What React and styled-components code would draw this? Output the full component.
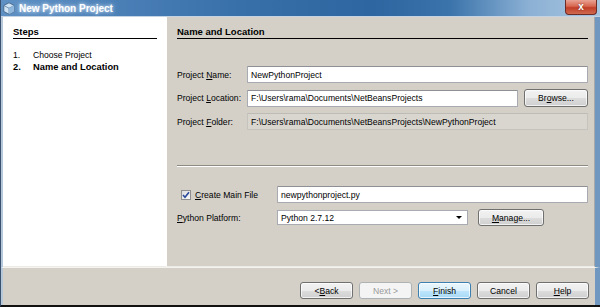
import React from "react";
import styled, { createGlobalStyle, css } from "styled-components";

const Global = createGlobalStyle`
  html, body { margin: 0; padding: 0; background: #fff; }
  body { width: 600px; height: 307px; overflow: hidden; font-family: "Liberation Sans", Arial, sans-serif; }
  * { box-sizing: border-box; }
`;

const Window = styled.div`
  width: 600px;
  height: 307px;
  display: flex;
  flex-direction: column;
  background: #d4d0c8;
  border-left: 1px solid #3a5270;
  border-bottom: 2px solid #111;
  font-size: 8.6px;
  color: #000;
`;

const TitleBar = styled.div`
  height: 17px;
  flex: none;
  display: flex;
  align-items: center;
  gap: 4px;
  padding: 0 3px 0 2px;
  background: linear-gradient(to right, #5e90c4 0%, #4a7fb6 20%, #3870a9 40%, #2d66a0 62%, #3b74ab 75%, #8bb0d4 88%, #a9c6e0 100%);
  border-bottom: 1px solid #c3d3e4;
`;

const TitleText = styled.span`
  color: #fff;
  font-weight: bold;
  font-size: 10px;
  text-shadow: 0 0 3px #d8e6f4, 0 0 6px #a8c4e0;
  flex: 1;
`;

const CloseButton = styled.div`
  width: 32px;
  height: 15px;
  margin-top: -2px;
  border: 1px solid #6d2b25;
  border-top: none;
  border-radius: 0 0 4px 4px;
  background: linear-gradient(#e9a394 0%, #d6654f 45%, #c13e28 55%, #cf6a4f 100%);
  display: flex;
  align-items: center;
  justify-content: center;
  color: #fff;
  font-weight: bold;
  font-size: 10px;
  text-shadow: 0 0 2px #6d2b25;
`;

const Body = styled.div`
  flex: 1;
  display: flex;
  border-left: 2px solid #b7c8db;
  border-right: 5px solid #6f97c0;
  min-height: 0;
`;

const StepsPanel = styled.div`
  width: 163px;
  flex: none;
  background: #fff;
  padding: 9px 9px 0 10px;
  border-bottom: 1px solid #ecebe6;
`;

const Header = styled.div`
  font-weight: bold;
  font-size: 9.5px;
  line-height: 12px;
  border-bottom: 1px solid #000;
  padding-bottom: 0;
`;

const StepList = styled.ol`
  list-style: none;
  margin: 10px 0 0;
  padding: 0;
`;

const Step = styled.li`
  display: flex;
  line-height: 12px;
  font-weight: ${(p) => (p.$current ? "bold" : "normal")};
  font-size: ${(p) => (p.$current ? "9.3px" : "8.6px")};
`;

const StepNum = styled.span`
  width: 20px;
  flex: none;
`;

const Content = styled.div`
  flex: 1;
  display: flex;
  flex-direction: column;
  padding: 9px 6px 0 10px;
  border-left: 1px solid #fff;
  border-right: 1px solid #a8a8a8;
  border-bottom: 1px solid #ecebe6;
`;

const Form = styled.div`
  display: grid;
  grid-template-columns: 70px 1fr;
  align-items: center;
  row-gap: 6px;
  margin-top: 27px;
`;

const Label = styled.span`
  white-space: nowrap;
`;

const FieldRow = styled.div`
  display: flex;
  gap: 6px;
  align-items: center;
`;

const fieldBase = css`
  height: 17px;
  display: flex;
  align-items: center;
  padding: 0 3px;
  white-space: nowrap;
  overflow: hidden;
`;

const Field = styled.div`
  ${fieldBase}
  flex: 1;
  background: ${(p) => (p.$disabled ? "#d9d6d0" : "#fff")};
  border: 1px solid ${(p) => (p.$disabled ? "#c5c3be" : "#a9abb2")};
  border-top-color: ${(p) => (p.$disabled ? "#bdbbb6" : "#8e9096")};
  border-radius: 1px;
`;

const Button = styled.div`
  height: ${(p) => p.$h || 17}px;
  width: ${(p) => p.$w}px;
  flex: none;
  display: flex;
  align-items: center;
  justify-content: center;
  border: 1px solid ${(p) => (p.$default ? "#3c7fb1" : p.$disabled ? "#adb2b5" : "#707070")};
  border-radius: 3px;
  color: ${(p) => (p.$disabled ? "#9a9a9a" : "#000")};
  background: ${(p) =>
    p.$default
      ? "linear-gradient(#eaf6fd 0%, #d9f0fc 50%, #bee6fd 51%, #a7d9f5 100%)"
      : p.$disabled
      ? "#f4f4f4"
      : "linear-gradient(#f2f2f2 0%, #ebebeb 50%, #dddddd 51%, #cfcfcf 100%)"};
  box-shadow: inset 0 0 0 1px ${(p) => (p.$disabled ? "#f4f4f4" : "rgba(255,255,255,0.7)")};
`;

const Separator = styled.div`
  margin-top: 35px;
  border-top: 1px solid #8d8a84;
  border-bottom: 1px solid #fff;
`;

const BottomForm = styled.div`
  display: grid;
  grid-template-columns: 100px 1fr;
  align-items: center;
  row-gap: 6px;
  margin-top: 19px;
`;

const CheckLabel = styled.label`
  display: flex;
  align-items: center;
  gap: 4px;
  padding-left: 4px;
`;

const Check = styled.span`
  width: 10px;
  height: 10px;
  border: 1px solid #8f8f8f;
  background: linear-gradient(135deg, #dcdcdc, #fafafa);
  display: flex;
  align-items: center;
  justify-content: center;
`;

const Select = styled.div`
  ${fieldBase}
  width: 191px;
  height: 15px;
  background: #fff;
  border: 1px solid #a9abb2;
  justify-content: space-between;
`;

const Arrow = styled.span`
  width: 0;
  height: 0;
  border-left: 3px solid transparent;
  border-right: 3px solid transparent;
  border-top: 3px solid #000;
  margin-right: 2px;
`;

const PlatformRow = styled.div`
  display: flex;
  align-items: center;
  gap: 10px;
`;

const ButtonBar = styled.div`
  height: 38px;
  flex: none;
  display: flex;
  justify-content: flex-end;
  align-items: flex-start;
  gap: 6px;
  padding: 14px 6px 0 0;
  border-left: 2px solid #b7c8db;
  border-right: 5px solid #6f97c0;
  border-top: 1px solid #f4f3ef;
`;

const U = styled.u`
  text-decoration: underline;
  text-underline-offset: 1px;
`;

function CubeIcon() {
  return (
    <svg width="12" height="13" viewBox="0 0 12 13">
      <path d="M6 0.8 L11.2 3.5 L11.2 9.5 L6 12.2 L0.8 9.5 L0.8 3.5 Z" fill="#cfe3f5" stroke="#3b5d80" strokeWidth="0.8" />
      <path d="M0.8 3.5 L6 6.2 L11.2 3.5" fill="none" stroke="#5b7fa3" strokeWidth="0.8" />
      <path d="M6 6.2 L6 12.2" stroke="#5b7fa3" strokeWidth="0.8" />
      <path d="M6 6.2 L11.2 3.5 L11.2 9.5 L6 12.2 Z" fill="#8fb6dc" />
    </svg>
  );
}

function CheckMark() {
  return (
    <svg width="8" height="8" viewBox="0 0 8 8">
      <path d="M1 4 L3 6.3 L7 1.2" fill="none" stroke="#2a4a9c" strokeWidth="1.6" />
    </svg>
  );
}

export default function App() {
  return (
    <>
      <Global />
      <Window>
        <TitleBar>
          <CubeIcon />
          <TitleText>New Python Project</TitleText>
          <CloseButton>x</CloseButton>
        </TitleBar>
        <Body>
          <StepsPanel>
            <Header>Steps</Header>
            <StepList>
              <Step>
                <StepNum>1.</StepNum>Choose Project
              </Step>
              <Step $current>
                <StepNum>2.</StepNum>Name and Location
              </Step>
            </StepList>
          </StepsPanel>
          <Content>
            <Header>Name and Location</Header>
            <Form>
              <Label>
                Project <U>N</U>ame:
              </Label>
              <Field>NewPythonProject</Field>
              <Label>
                Project <U>L</U>ocation:
              </Label>
              <FieldRow>
                <Field>F:\Users\rama\Documents\NetBeansProjects</Field>
                <Button $w={64} $h={18}>
                  Br<U>o</U>wse...
                </Button>
              </FieldRow>
              <Label>
                Project <U>F</U>older:
              </Label>
              <Field $disabled>F:\Users\rama\Documents\NetBeansProjects\NewPythonProject</Field>
            </Form>
            <Separator />
            <BottomForm>
              <CheckLabel>
                <Check>
                  <CheckMark />
                </Check>
                <span>
                  <U>C</U>reate Main File
                </span>
              </CheckLabel>
              <Field>newpythonproject.py</Field>
              <Label>
                <U>P</U>ython Platform:
              </Label>
              <PlatformRow>
                <Select>
                  <span>Python 2.7.12</span>
                  <Arrow />
                </Select>
                <Button $w={66} $h={17}>
                  <U>M</U>anage...
                </Button>
              </PlatformRow>
            </BottomForm>
          </Content>
        </Body>
        <ButtonBar>
          <Button $w={53}>
            &lt; <U>B</U>ack
          </Button>
          <Button $w={53} $disabled>
            Next &gt;
          </Button>
          <Button $w={53} $default>
            <U>F</U>inish
          </Button>
          <Button $w={53}>Cancel</Button>
          <Button $w={53}>
            <U>H</U>elp
          </Button>
        </ButtonBar>
      </Window>
    </>
  );
}
